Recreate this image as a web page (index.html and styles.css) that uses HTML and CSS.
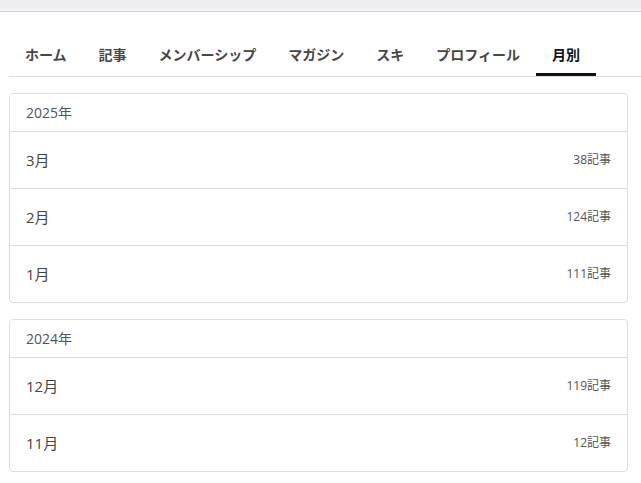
FILE: index.html
```html
<!DOCTYPE html>
<html lang="ja">
<head>
    <meta charset="UTF-8">
    <meta name="viewport" content="width=device-width, initial-scale=1.0">
    <title>月別アーカイブ</title>
    <link rel="stylesheet" href="styles.css">
</head>
<body>
    <div class="top-band"></div>

    <div class="content">
        <nav class="tabs">
            <a class="tab" href="#">ホーム</a>
            <a class="tab" href="#">記事</a>
            <a class="tab" href="#">メンバーシップ</a>
            <a class="tab" href="#">マガジン</a>
            <a class="tab" href="#">スキ</a>
            <a class="tab" href="#">プロフィール</a>
            <a class="tab active" href="#">月別</a>
        </nav>

        <section class="year-card">
            <div class="year-head">2025年</div>
            <a class="month-row" href="#"><span class="month">3月</span><span class="count">38記事</span></a>
            <a class="month-row" href="#"><span class="month">2月</span><span class="count">124記事</span></a>
            <a class="month-row" href="#"><span class="month">1月</span><span class="count">111記事</span></a>
        </section>

        <section class="year-card">
            <div class="year-head">2024年</div>
            <a class="month-row" href="#"><span class="month">12月</span><span class="count">119記事</span></a>
            <a class="month-row" href="#"><span class="month">11月</span><span class="count">12記事</span></a>
        </section>
    </div>
</body>
</html>
```

FILE: styles.css
```css
:root {
    --line: #dddddd;
    --text: #444444;
    --ink: #08131a;
}

body { margin: 0; background: #fff; font-family: "Open Sans", "Noto Sans CJK JP", sans-serif; color: var(--text); }
a { text-decoration: none; color: inherit; }

.top-band { height: 11px; background: linear-gradient(#ededf2, #ededf2 65%, #f5f5f8); border-bottom: 1px solid #d4d4d8; }

.content { padding: 20px 0 0 9px; }

.tabs { display: flex; border-bottom: 1px solid var(--line); }
.tab { padding: 12px 16px 12px; font-size: 14px; line-height: 20px; font-weight: 700; color: #474747; font-family: "Noto Sans CJK JP", sans-serif; }
.tab.active { color: var(--ink); box-shadow: inset 0 -3px 0 var(--ink); }

.year-card { margin: 16px 13px 0 0; border: 1px solid var(--line); border-radius: 4px; overflow: hidden; }
.year-head { padding: 10px 16px; font-size: 14px; line-height: 17px; color: #555; background: #fefefe; border-bottom: 1px solid var(--line); }
.month-row { display: flex; justify-content: space-between; align-items: center; padding: 18px 16px; line-height: 20px; border-bottom: 1px solid var(--line); }
.month-row:last-child { border-bottom: none; }
.month { font-size: 15px; color: var(--text); }
.count { font-size: 12px; color: #555; }
```
